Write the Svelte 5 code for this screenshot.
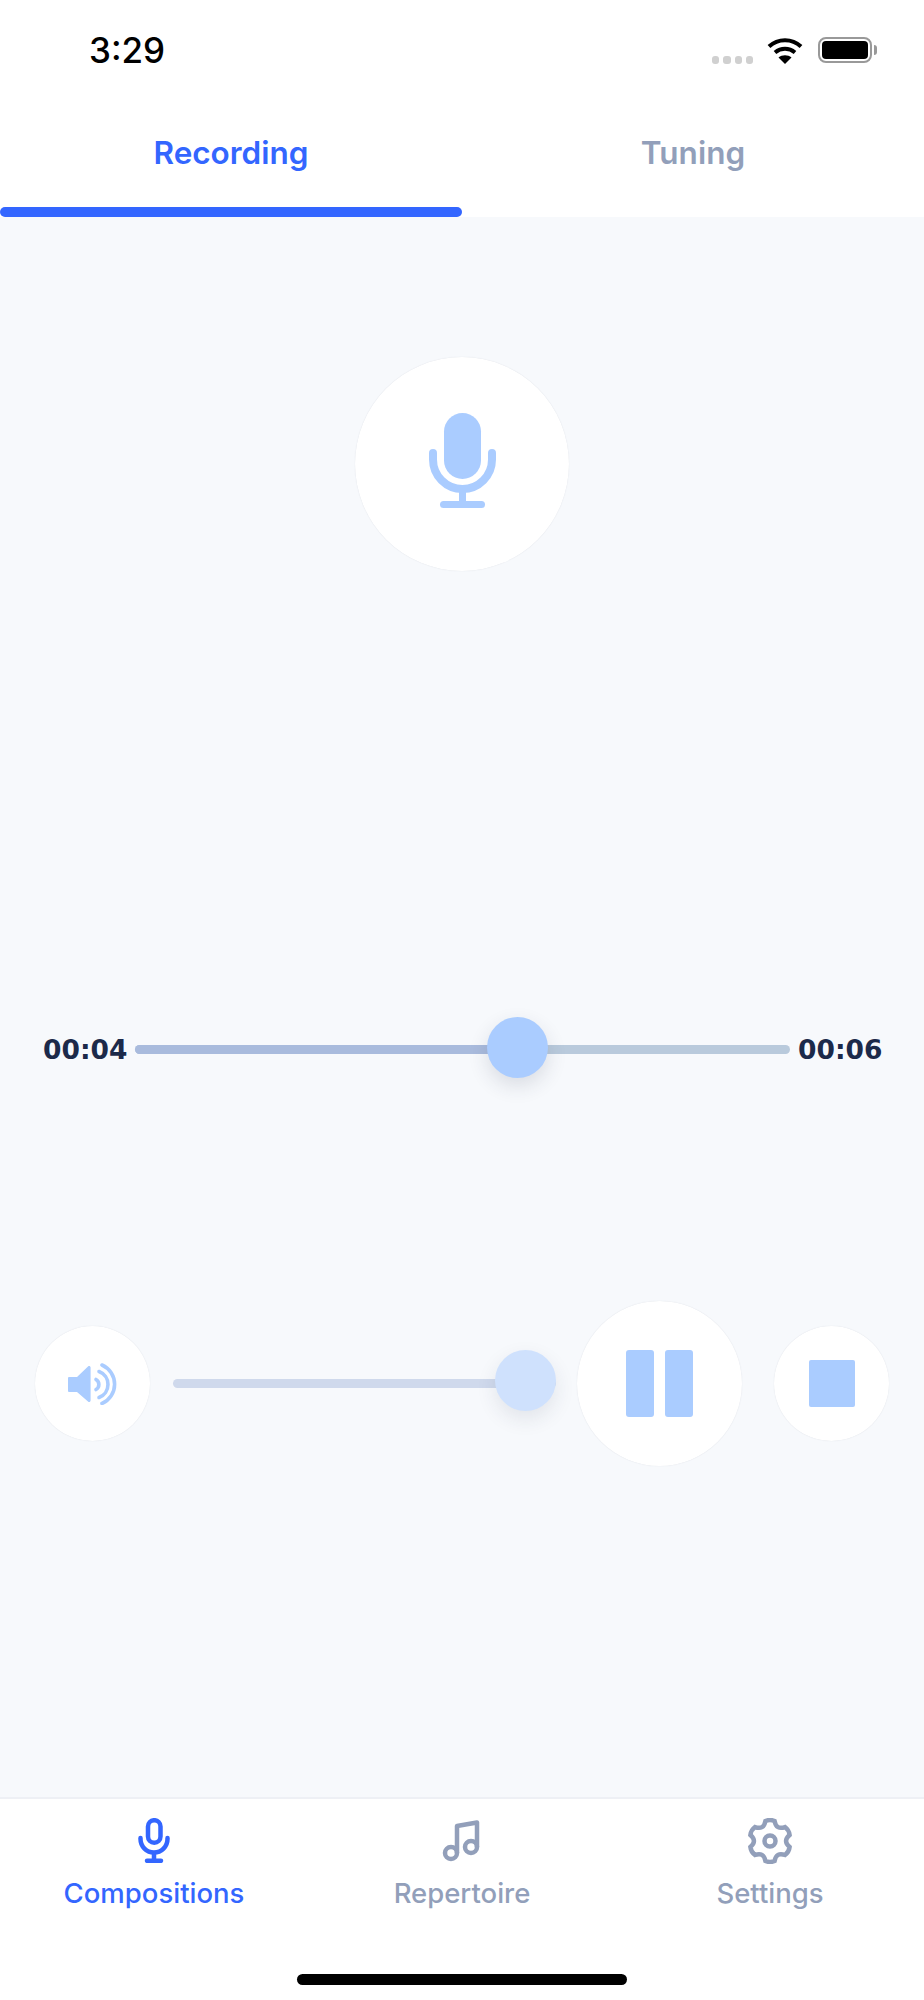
<script>
	const tabs = [
		{ label: 'Recording', active: true },
		{ label: 'Tuning', active: false }
	];
	const navItems = [
		{ label: 'Compositions', icon: 'mic', active: true },
		{ label: 'Repertoire', icon: 'music', active: false },
		{ label: 'Settings', icon: 'gear', active: false }
	];

	// six rounded lobes with scooped notches for the settings icon
	function gearPath(cx, cy, outer, notch, spread) {
		const at = (deg, r) => {
			const a = (deg * Math.PI) / 180;
			return `${(cx + r * Math.cos(a)).toFixed(2)} ${(cy + r * Math.sin(a)).toFixed(2)}`;
		};
		let d = '';
		for (let i = 0; i < 6; i++) {
			const c = -90 + i * 60;
			d += i === 0 ? `M${at(c - spread, outer)}` : '';
			d += `Q${at(c, outer + 1.5)} ${at(c + spread, outer)}`;
			d += `Q${at(c + 30, notch)} ${at(c + 60 - spread, outer)}`;
		}
		return d + 'Z';
	}
	const gear = gearPath(23, 23, 20.500, 12.500, 13);
</script>

<div class="screen">
	<header class="status">
		<span class="clock">3:29</span>
		<div class="status-icons">
			<div class="dots"><i></i><i></i><i></i><i></i></div>
			<svg class="wifi" width="36" height="27" viewBox="0 0 36 27" fill="none" stroke="#000" stroke-width="4">
				<path d="M2 9.500C11 1 25 1 34 9.500" />
				<path d="M8 15.500C14 10.500 22 10.500 28 15.500" />
				<path d="M18 27l-6.500-6.500C15 17.500 21 17.500 24.500 20.500z" fill="#000" stroke="none" />
			</svg>
			<div class="battery"><div class="battery-fill"></div></div>
		</div>
	</header>

	<nav class="tabs">
		{#each tabs as tab}
			<div class="tab" class:active={tab.active}>{tab.label}</div>
		{/each}
	</nav>

	<main class="content">
		<div class="mic-wrap">
			<div class="circle circle-lg">
				<svg class="mic" width="67" height="95" viewBox="0 0 67 95" fill="none">
					<rect x="15" width="37" height="66" rx="18.500" fill="#aaccff" />
					<path d="M4 40v6.500a29.500 29.500 0 0 0 59 0V40" stroke="#aaccff" stroke-width="8" stroke-linecap="round" />
					<rect x="30" y="78" width="7" height="12" fill="#aaccff" />
					<rect x="11" y="88" width="45" height="7" rx="3.500" fill="#aaccff" />
				</svg>
			</div>
		</div>

		<div class="time-row">
			<span class="time">00:04</span>
			<div class="track">
				<div class="track-done"></div>
				<div class="knob knob-time"></div>
			</div>
			<span class="time">00:06</span>
		</div>

		<div class="controls">
			<div class="circle circle-sm">
				<svg width="50" height="42" viewBox="0 0 50 42" fill="none">
					<path d="M0 15a1 1 0 0 1 1-1h8L20 3.500c1-1 2.600-.4 2.600 1v33c0 1.400-1.600 2-2.600 1L9 29H1a1 1 0 0 1-1-1z" fill="#aaccff" />
					<g stroke="#aaccff" stroke-width="3.600" stroke-linecap="round">
						<path d="M28 16.500a5.800 5.800 0 0 1 0 10" />
						<path d="M31 8.500a13.900 13.900 0 0 1 0 26" />
						<path d="M34 2a21 21 0 0 1 0 38.500" />
					</g>
				</svg>
			</div>
			<div class="volume">
				<div class="knob knob-volume"></div>
			</div>
			<div class="circle circle-md">
				<div class="pause"><i></i><i></i></div>
			</div>
			<div class="circle circle-sm">
				<div class="stop"></div>
			</div>
		</div>
	</main>

	<footer class="bottom-nav">
		<div class="nav-items">
			{#each navItems as item}
				<div class="nav-item" class:active={item.active}>
					<div class="nav-icon">
						{#if item.icon === 'mic'}
							<svg width="32" height="45" viewBox="0 0 32 45" fill="none" stroke="currentColor" stroke-width="4.500" stroke-linecap="round">
								<rect x="10" y="2.200" width="12.500" height="22.500" rx="6.250" />
								<path d="M2.500 20v1a13.500 13.500 0 0 0 27 0v-1" />
								<path d="M16 36v6" />
								<path d="M9 42.800h14" />
							</svg>
						{:else if item.icon === 'music'}
							<svg width="40" height="46" viewBox="0 0 40 46" fill="none" stroke="currentColor" stroke-width="4.500" stroke-linejoin="round">
								<circle cx="9" cy="35" r="6" />
								<circle cx="29" cy="29" r="6" />
								<path d="M15 35V8L35 4.500V29" />
							</svg>
						{:else}
							<svg width="46" height="46" viewBox="0 0 46 46" fill="none" stroke="currentColor" stroke-width="4.500">
								<path d={gear} />
								<circle cx="23" cy="23" r="5.500" />
							</svg>
						{/if}
					</div>
					<span class="nav-label">{item.label}</span>
				</div>
			{/each}
		</div>
		<div class="home-bar"></div>
	</footer>
</div>

<style>
	:global(body) {
		margin: 0;
		background: #fff;
	}

	.screen {
		width: 924px;
		height: 2000px;
		display: flex;
		flex-direction: column;
		font-family: Inter, 'Liberation Sans', sans-serif;
		background: #fff;
	}

	.status {
		height: 100px;
		flex: none;
		display: flex;
		justify-content: space-between;
		align-items: flex-start;
		padding: 32px 52px 0 89px;
		box-sizing: border-box;
	}

	.clock {
		font-size: 35px;
		line-height: 36px;
		font-weight: 500;
		color: #000;
	}

	.status-icons {
		display: flex;
		align-items: flex-start;
		padding-top: 5px;
	}

	.dots {
		display: flex;
		gap: 4px;
		margin: 19px 14px 0 0;
	}

	.dots i {
		width: 7.250px;
		height: 8px;
		border-radius: 3px;
		background: #d0d0d0;
	}

	.wifi {
		margin-right: 15px;
	}

	.battery {
		position: relative;
		width: 54px;
		height: 26px;
		box-sizing: border-box;
		border: 2px solid #999;
		border-radius: 8px;
		padding: 2px;
	}

	.battery::after {
		content: '';
		position: absolute;
		right: -7px;
		top: 6px;
		width: 3px;
		height: 10px;
		background: #999;
		border-radius: 0 3px 3px 0;
	}

	.battery-fill {
		height: 100%;
		background: #000;
		border-radius: 4px;
	}

	.tabs {
		display: flex;
		flex: none;
		height: 117px;
	}

	.tab {
		flex: 1;
		box-sizing: border-box;
		padding-top: 33px;
		text-align: center;
		font-size: 31.500px;
		line-height: 40px;
		font-weight: 600;
		color: #929fba;
		position: relative;
	}

	.tab.active {
		color: #3366ff;
	}

	.tab.active::after {
		content: '';
		position: absolute;
		left: 0;
		right: 0;
		bottom: 0;
		height: 10px;
		background: #3366ff;
		border-radius: 5px;
	}

	.content {
		flex: 1;
		background: #f7f9fc;
		display: flex;
		flex-direction: column;
	}

	.circle {
		flex: none;
		box-sizing: border-box;
		border-radius: 50%;
		background: #fff;
		box-shadow: 0 0 1px rgba(60, 70, 100, 0.18);
		display: flex;
		align-items: center;
		justify-content: center;
	}

	.circle-lg {
		width: 214px;
		height: 214px;
	}

	.circle-md {
		width: 165px;
		height: 165px;
	}

	.circle-sm {
		width: 115px;
		height: 115px;
	}

	.mic-wrap {
		display: flex;
		justify-content: center;
		padding-top: 140px;
	}

	.mic {
		margin-bottom: 7px;
	}

	.time-row {
		display: flex;
		align-items: center;
		margin-top: 447px;
		padding: 0 43px;
		height: 62px;
	}

	.time {
		font-family: 'DejaVu Sans', Inter, sans-serif;
		font-size: 26.500px;
		font-weight: 700;
		color: #1c2a4a;
		width: 83px;
		flex: none;
		white-space: nowrap;
	}

	.track {
		flex: 1;
		margin: 0 8px 0 9px;
		height: 9px;
		background: #b9cadc;
		border-radius: 5px;
		position: relative;
	}

	.track-done {
		width: 382px;
		height: 100%;
		background: #a9bbdd;
		border-radius: 5px 0 0 5px;
	}

	.knob {
		position: absolute;
		width: 61px;
		height: 61px;
		border-radius: 50%;
	}

	.knob-time {
		left: 352px;
		top: -28px;
		background: #aaccff;
		box-shadow: 0 8px 20px rgba(40, 50, 80, 0.14);
	}

	.controls {
		display: flex;
		align-items: center;
		margin-top: 221px;
		padding-left: 35px;
		height: 165px;
	}

	.volume {
		position: relative;
		width: 383px;
		height: 9px;
		margin: 0 21px 0 23px;
		background: #cfd9ec;
		border-radius: 5px;
		flex: none;
	}

	.knob-volume {
		right: 0;
		top: -29px;
		background: #cfe1fd;
		box-shadow: 0 8px 20px rgba(40, 50, 80, 0.1);
	}

	.controls .circle-sm:last-child {
		margin-left: 32px;
	}

	.pause {
		display: flex;
		gap: 11px;
	}

	.pause i {
		width: 28px;
		height: 67px;
		background: #aaccff;
		border-radius: 3px;
	}

	.stop {
		width: 46px;
		height: 47px;
		background: #aaccff;
		border-radius: 2px;
	}

	.bottom-nav {
		flex: none;
		height: 203px;
		box-sizing: border-box;
		border-top: 2px solid #eef0f5;
		background: #fff;
		display: flex;
		flex-direction: column;
		align-items: center;
	}

	.nav-items {
		display: flex;
		width: 100%;
		padding-top: 19px;
	}

	.nav-item {
		flex: 1;
		display: flex;
		flex-direction: column;
		align-items: center;
		color: #929fba;
	}

	.nav-item.active {
		color: #3366ff;
	}

	.nav-icon {
		height: 46px;
		display: flex;
		align-items: flex-start;
	}

	.nav-label {
		margin-top: 11px;
		font-size: 27.500px;
		line-height: 36px;
		font-weight: 500;
	}

	.home-bar {
		margin-top: 63px;
		width: 330px;
		height: 11px;
		background: #000;
		border-radius: 6px;
	}
</style>
